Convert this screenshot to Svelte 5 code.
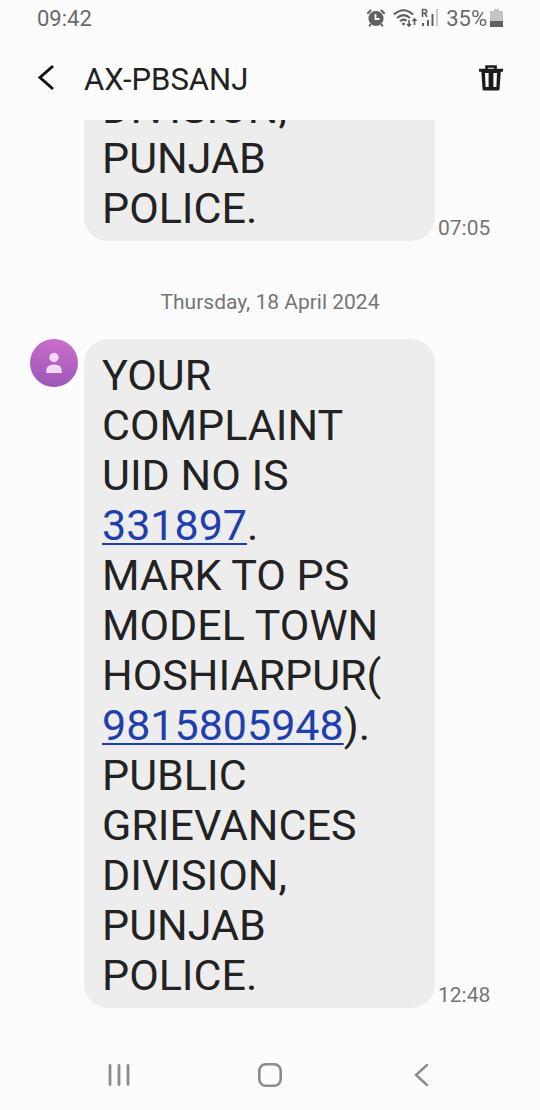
<script lang="ts">
  interface Part {
    text: string;
    href?: string;
  }

  interface Message {
    id: number;
    time: string;
    day?: string;
    avatar?: boolean;
    parts: Part[];
  }

  const sender = "AX-PBSANJ";

  const messages: Message[] = [
    { id: 1, time: "07:05", parts: [{ text: "DIVISION, PUNJAB POLICE." }] },
    {
      id: 2,
      time: "12:48",
      day: "Thursday, 18 April 2024",
      avatar: true,
      parts: [
        { text: "YOUR COMPLAINT\nUID NO IS " },
        { text: "331897", href: "tel:331897" },
        { text: ".\nMARK TO PS MODEL TOWN HOSHIARPUR(\n" },
        { text: "9815805948", href: "tel:9815805948" },
        { text: "). PUBLIC GRIEVANCES DIVISION, PUNJAB POLICE." }
      ]
    }
  ];
</script>

<div class="phone">
  <div class="status">
    <span>09:42</span>
    <div class="status__right">
      <svg width="20" height="20" viewBox="0 0 20 20" fill="none" stroke="#606060" aria-hidden="true">
        <circle cx="10" cy="10.5" r="7.6" fill="#606060" stroke="none" />
        <path d="M1.3 5.8 5.2 2M14.8 2l3.9 3.8M5 16l-1.8 2.4M15 16l1.800 2.4" stroke-width="2" />
        <path d="M9.500 6v5h4" stroke="#fcfcfc" stroke-width="1.8" />
      </svg>
      <svg class="wifi" width="25" height="20" viewBox="0 0 25 20" fill="none" stroke="#606060" stroke-width="2.1" aria-hidden="true">
        <path d="M1 6.500q9.500-8.500 19 0M4 10q6.500-5.600 13 0M7 13.200q3.500-3 6.500-.5" />
        <circle cx="10.500" cy="16" r="1.400" fill="#606060" stroke="none" />
        <path d="M16 12v6M14 16l2 2 2-2M21.500 17v-6M19.500 13l2-2 2 2" stroke-width="1.600" />
      </svg>
      <svg width="18" height="20" viewBox="0 0 18 20" fill="none" stroke="#606060" aria-hidden="true">
        <path d="M1.500 9V1.500h2.200q2 0 2 1.900t-2 1.900H1.500M3.700 5.300 6 9" stroke-width="1.600" />
        <path d="M2 18v-3M7 18v-6M11.500 18V6" stroke-width="2" />
        <path d="M16 18V1" stroke="#c8c8c8" stroke-width="2" />
      </svg>
      <span class="status__charge">35%</span>
      <svg width="13" height="20" viewBox="0 0 13 20" aria-hidden="true">
        <path d="M4 1h5v2h4v10H0V3h4z" fill="#c4c4c4" />
        <path d="M0 13h13v6H0z" fill="#606060" />
      </svg>
    </div>
  </div>

  <header class="header">
    <button class="icon-button" aria-label="Back">
      <svg width="18" height="30" viewBox="0 0 18 30" fill="none" stroke="#111" stroke-width="3">
        <path d="M16 2 3 13.500 16 25" />
      </svg>
    </button>
    <h1 class="header__title">{sender}</h1>
    <button class="icon-button" aria-label="Delete">
      <svg width="24" height="30" viewBox="0 0 24 30" aria-hidden="true">
        <path d="M7.500 6V2.500h9V6" fill="none" stroke="#1c1c1c" stroke-width="2.600" />
        <path d="M0 4.800h24v3h-2.200L20.500 25q0 1.500-1.500 1.500H5Q3.500 26.500 3.500 25L2.400 7.800H0z" fill="#1c1c1c" />
        <path d="M6 9h3.600v14H6.600zM14.400 9H18l-.6 14h-3z" fill="#fcfcfc" />
      </svg>
    </button>
  </header>

  <main class="thread">
    {#each messages as message (message.id)}
      {#if message.day}
        <p class="day">{message.day}</p>
      {/if}
      <article class="message">
        <div class="message__avatar">
          {#if message.avatar}
            <svg width="48" height="48" viewBox="0 0 48 48" aria-hidden="true">
              <defs>
                <linearGradient id="avatar" x1="0.600" y1="0" x2="0.400" y2="1">
                  <stop offset="0" stop-color="#cb6dcb" />
                  <stop offset="1" stop-color="#9a57b8" />
                </linearGradient>
              </defs>
              <circle cx="24" cy="24" r="24" fill="url(#avatar)" />
              <g fill="#f1d9f3">
                <circle cx="24" cy="18.500" r="4.700" />
                <path d="M16.300 34v-2.500q0-6 7.700-6t7.700 6V34z" />
              </g>
            </svg>
          {/if}
        </div>
        <p class="bubble">{#each message.parts as part}{#if part.href}<a href={part.href}>{part.text}</a>{:else}{part.text}{/if}{/each}</p>
        <time class="message__time">{message.time}</time>
      </article>
    {/each}
  </main>

  <nav class="navbar">
    <button class="icon-button" aria-label="Recent apps">
      <svg width="24" height="24" viewBox="0 0 24 24" fill="none" stroke="#8c8c8c" stroke-width="2.8" stroke-linecap="round">
        <path d="M3 2.500v19M12 2.500v19M21 2.500v19" />
      </svg>
    </button>
    <button class="icon-button" aria-label="Home">
      <svg width="24" height="24" viewBox="0 0 24 24" fill="none" stroke="#8c8c8c" stroke-width="2.6">
        <rect x="1.300" y="1.300" width="21.400" height="21.400" rx="6.500" />
      </svg>
    </button>
    <button class="icon-button" aria-label="Back">
      <svg width="24" height="24" viewBox="0 0 24 24" fill="none" stroke="#8c8c8c" stroke-width="2.4" stroke-linecap="round">
        <path d="M18 2 7 12l11 10" />
      </svg>
    </button>
  </nav>
</div>

<style>
  :global(body) {
    background: #fcfcfc;
  }

  .phone {
    display: flex;
    flex-direction: column;
    height: 100vh;
    font-family: Roboto, sans-serif;
    color: #222;
    background: #fcfcfc;
  }

  svg {
    display: block;
  }

  .status {
    display: flex;
    justify-content: space-between;
    align-items: center;
    flex: none;
    height: 36px;
    padding: 0 37px;
    font-size: 22px;
    color: #6a6a6a;
  }

  .status__right {
    display: flex;
    align-items: center;
    gap: 3px;
  }

  .wifi {
    margin-left: 4px;
  }

  .status__charge {
    margin-left: 4px;
  }

  .header {
    display: flex;
    align-items: center;
    flex: none;
    height: 84px;
    padding: 2px 37px 0;
    box-sizing: border-box;
  }

  .header__title {
    flex: 1;
    margin: 0 0 0 29px;
    font-size: 31px;
    font-weight: 400;
  }

  .icon-button {
    padding: 0;
    border: 0;
    background: none;
    cursor: pointer;
  }

  .thread {
    display: flex;
    flex-direction: column;
    justify-content: flex-end;
    flex: 1;
    min-height: 0;
    padding-bottom: 32px;
    overflow: hidden;
  }

  .day {
    margin: 47px 0 22px;
    font-size: 21px;
    line-height: 29px;
    text-align: center;
    color: #757575;
  }

  .message {
    display: flex;
    flex: none;
    padding-left: 30px;
  }

  .message__avatar {
    flex: none;
    width: 48px;
    margin-right: 6px;
  }

  .bubble {
    box-sizing: border-box;
    width: 65vw;
    margin: 0;
    padding: 11px 24px 8px 18px;
    border-radius: 24px;
    background: #ededed;
    font-size: 43px;
    line-height: 50px;
    white-space: pre-line;
  }

  .bubble a {
    color: #1f3fae;
    text-decoration-thickness: 2px;
    text-underline-offset: 3px;
  }

  .message__time {
    align-self: flex-end;
    margin-left: 3px;
    font-size: 21px;
    line-height: 25px;
    color: #757575;
  }

  .navbar {
    display: flex;
    justify-content: space-between;
    align-items: center;
    flex: none;
    height: 70px;
    padding: 0 107px;
  }
</style>
